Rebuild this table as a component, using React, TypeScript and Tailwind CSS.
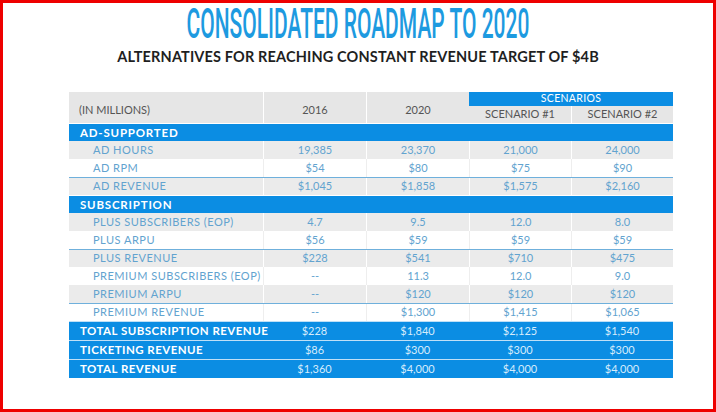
import React from 'react';

type Kind = 'section' | 'gray' | 'white' | 'total';

interface RowData {
  label: string;
  values?: string[];
  kind: Kind;
  line?: boolean;
}

const rows: RowData[] = [
  { label: 'AD-SUPPORTED', kind: 'section' },
  { label: 'AD HOURS', values: ['19,385', '23,370', '21,000', '24,000'], kind: 'gray' },
  { label: 'AD RPM', values: ['$54', '$80', '$75', '$90'], kind: 'white' },
  { label: 'AD REVENUE', values: ['$1,045', '$1,858', '$1,575', '$2,160'], kind: 'gray', line: true },
  { label: 'SUBSCRIPTION', kind: 'section' },
  { label: 'PLUS SUBSCRIBERS (EOP)', values: ['4.7', '9.5', '12.0', '8.0'], kind: 'gray' },
  { label: 'PLUS ARPU', values: ['$56', '$59', '$59', '$59'], kind: 'white' },
  { label: 'PLUS REVENUE', values: ['$228', '$541', '$710', '$475'], kind: 'gray', line: true },
  { label: 'PREMIUM SUBSCRIBERS (EOP)', values: ['--', '11.3', '12.0', '9.0'], kind: 'white' },
  { label: 'PREMIUM ARPU', values: ['--', '$120', '$120', '$120'], kind: 'gray' },
  { label: 'PREMIUM REVENUE', values: ['--', '$1,300', '$1,415', '$1,065'], kind: 'white', line: true },
  { label: 'TOTAL SUBSCRIPTION REVENUE', values: ['$228', '$1,840', '$2,125', '$1,540'], kind: 'total' },
  { label: 'TICKETING REVENUE', values: ['$86', '$300', '$300', '$300'], kind: 'total' },
  { label: 'TOTAL REVENUE', values: ['$1,360', '$4,000', '$4,000', '$4,000'], kind: 'total' },
];

const cols = 'grid grid-cols-[194px_103px_103px_102px_102px]';

const Row: React.FC<{ row: RowData }> = ({ row }) => {
  if (row.kind === 'section') {
    return (
      <div className="h-[18px] bg-[#0b8de3] border-t border-white flex items-center pl-[11px] text-[11.5px] font-bold tracking-[0.07em] text-white">
        {row.label}
      </div>
    );
  }
  if (row.kind === 'total') {
    return (
      <div className={`${cols} h-[19px] bg-[#0b8de3] border-t border-[#bfe0f7] text-[11px]`}>
        <div className="flex items-center pl-[11px] text-[11.5px] font-bold tracking-[0.04em] text-white whitespace-nowrap">
          {row.label}
        </div>
        {row.values?.map((v, i) => (
          <div key={i} className="flex items-center justify-center text-[#d6ecfc]">{v}</div>
        ))}
      </div>
    );
  }
  const gray = row.kind === 'gray';
  return (
    <div
      className={`${cols} h-[18px] text-[11px] text-[#62a3cf] ${gray ? 'bg-[#ebebeb]' : 'bg-white'} ${
        row.line ? 'border-t border-[#6fb0dc]' : ''
      }`}
    >
      <div className="flex items-center pl-[24px] tracking-[0.045em] whitespace-nowrap">{row.label}</div>
      {row.values?.map((v, i) => (
        <div
          key={i}
          className={`flex items-center justify-center border-l ${gray ? 'border-white' : 'border-[#eeeeee]'}`}
        >
          {v}
        </div>
      ))}
    </div>
  );
};

export default function App() {
  return (
    <div className="w-[716px] h-[412px] bg-white border-[3px] border-[#ee0000] flex flex-col items-center overflow-hidden font-['Lato',sans-serif]">
      <div className="h-[42px] leading-[42px] text-[42px] font-['Roboto',sans-serif] font-medium text-[#1d9ae0] whitespace-nowrap">
        <span className="inline-block scale-x-[0.5] origin-center">CONSOLIDATED ROADMAP TO 2020</span>
      </div>
      <div className="mt-[4px] h-[15px] leading-[15px] text-[14.5px] font-bold tracking-[0.01em] text-[#1f1f1f] whitespace-nowrap">
        ALTERNATIVES FOR REACHING CONSTANT REVENUE TARGET OF $4B
      </div>

      <div className="mt-[28px] self-start ml-[66px] w-[604px]">
        <div className={`${cols} h-[31px] text-[11px] text-[#555555]`}>
          <div className="bg-[#e6e6e6] flex items-center pl-[10px] pt-[5px]">(IN MILLIONS)</div>
          <div className="bg-[#e6e6e6] border-l border-white flex items-center justify-center pt-[5px]">2016</div>
          <div className="bg-[#e6e6e6] border-l border-white flex items-center justify-center pt-[5px]">2020</div>
          <div className="col-span-2 flex flex-col">
            <div className="h-[14px] bg-[#0b8de3] text-white text-[10.5px] flex items-center justify-center tracking-[0.03em]">
              SCENARIOS
            </div>
            <div className="flex-1 grid grid-cols-2 bg-[#e6e6e6]">
              <div className="flex items-center justify-center">SCENARIO #1</div>
              <div className="flex items-center justify-center border-l border-white">SCENARIO #2</div>
            </div>
          </div>
        </div>
        {rows.map((r, i) => (
          <Row key={i} row={r} />
        ))}
      </div>
    </div>
  );
}
